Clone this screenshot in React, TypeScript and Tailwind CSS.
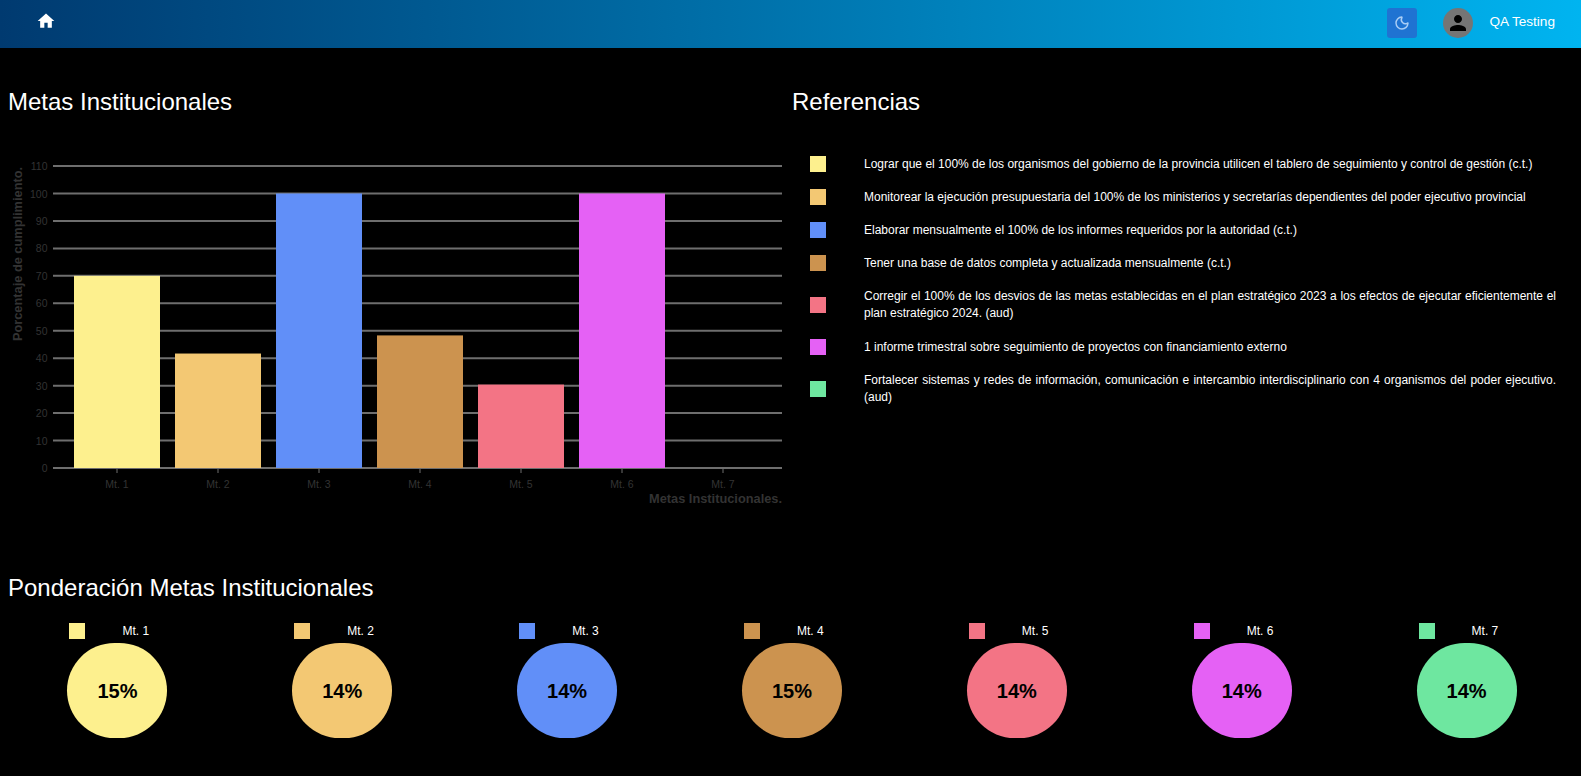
import { Moon } from "lucide-react"

const metas = [
  { label: "Mt. 1", value: 70, peso: 15, color: "#fdf08e", swatch: "bg-[#fdf08e]", text: "Lograr que el 100% de los organismos del gobierno de la provincia utilicen el tablero de seguimiento y control de gestión (c.t.)" },
  { label: "Mt. 2", value: 41.7, peso: 14, color: "#f3c873", swatch: "bg-[#f3c873]", text: "Monitorear la ejecución presupuestaria del 100% de los ministerios y secretarías dependientes del poder ejecutivo provincial" },
  { label: "Mt. 3", value: 100, peso: 14, color: "#618ff8", swatch: "bg-[#618ff8]", text: "Elaborar mensualmente el 100% de los informes requeridos por la autoridad (c.t.)" },
  { label: "Mt. 4", value: 48.3, peso: 15, color: "#cc934f", swatch: "bg-[#cc934f]", text: "Tener una base de datos completa y actualizada mensualmente (c.t.)" },
  { label: "Mt. 5", value: 30.4, peso: 14, color: "#f37485", swatch: "bg-[#f37485]", text: "Corregir el 100% de los desvios de las metas establecidas en el plan estratégico 2023 a los efectos de ejecutar eficientemente el plan estratégico 2024. (aud)" },
  { label: "Mt. 6", value: 100, peso: 14, color: "#e561f5", swatch: "bg-[#e561f5]", text: "1 informe trimestral sobre seguimiento de proyectos con financiamiento externo" },
  { label: "Mt. 7", value: 0, peso: 14, color: "#6ee7a0", swatch: "bg-[#6ee7a0]", text: "Fortalecer sistemas y redes de información, comunicación e intercambio interdisciplinario con 4 organismos del poder ejecutivo. (aud)" },
]

const yTicks = [0, 10, 20, 30, 40, 50, 60, 70, 80, 90, 100, 110]

function BarChart() {
  const y0 = 320
  const perUnit = 2.745
  return (
    <svg width="784" height="370" className="block">
      {yTicks.map((t) => (
        <g key={t}>
          <line x1="53" x2="782" y1={y0 - t * perUnit} y2={y0 - t * perUnit} stroke="#6e6e6e" strokeWidth="2" />
          <text x="47.5" y={y0 - t * perUnit + 4} textAnchor="end" fontSize="10.5" fill="#333333">{t}</text>
        </g>
      ))}
      {metas.map((m, i) => (
        <g key={m.label}>
          <rect x={74 + i * 101} width="86" y={y0 - m.value * perUnit} height={m.value * perUnit} fill={m.color} />
          <line x1={117 + i * 101} x2={117 + i * 101} y1={y0} y2={y0 + 5} stroke="#6e6e6e" strokeWidth="1" />
          <text x={117 + i * 101} y={y0 + 20} textAnchor="middle" fontSize="10.5" fill="#333333">{m.label}</text>
        </g>
      ))}
      <text x="782" y={y0 + 35} textAnchor="end" fontSize="12.8" fontWeight="700" fill="#333333">Metas Institucionales.</text>
      <text transform="translate(22 106) rotate(-90)" textAnchor="middle" x="0" y="0" fontSize="12.8" fontWeight="700" fill="#333333">Porcentaje de cumplimiento.</text>
    </svg>
  )
}

export default function App() {
  return (
    <div className="min-h-[776px] bg-black font-['Liberation_Sans',Arial,sans-serif] text-white overflow-hidden">
      <header className="h-12 flex items-center bg-gradient-to-r from-[#003a70] to-[#00b4f0]">
        <div className="pl-[36px] pb-[7px]">
          <svg width="20" height="20" viewBox="0 0 24 24" fill="#ffffff"><path d="M10 20v-6h4v6h5v-8h3L12 3 2 12h3v8z" /></svg>
        </div>
        <div className="ml-auto flex items-center pb-[2px]">
          <button className="w-[30px] h-[30px] rounded-[3px] bg-[#1f73d2] flex items-center justify-center">
            <Moon size={16} strokeWidth={2.2} className="text-[#a9cdf5]" />
          </button>
          <div className="ml-[26px] w-[30px] h-[30px] rounded-full bg-[#757575] flex items-center justify-center">
            <svg width="24" height="24" viewBox="0 0 24 24" fill="#000000"><path d="M12 12c2.21 0 4-1.79 4-4s-1.79-4-4-4-4 1.79-4 4 1.79 4 4 4m0 2c-2.67 0-8 1.34-8 4v2h16v-2c0-2.66-5.33-4-8-4" /></svg>
          </div>
          <span className="ml-[17px] mr-[26px] pb-[2px] text-[13.6px]">QA Testing</span>
        </div>
      </header>

      <main>
        <section className="flex">
          <div className="w-[784px] shrink-0">
            <h2 className="mt-[38px] pl-2 text-2xl leading-8">Metas Institucionales</h2>
            <div className="mt-[30px]">
              <BarChart />
            </div>
          </div>
          <div className="flex-1 pl-[8px] pr-[25px]">
            <h2 className="mt-[38px] text-2xl leading-8">Referencias</h2>
            <ul className="mt-[29.5px]">
              {metas.map((m) => (
                <li key={m.label} className="flex items-center py-2 [&:nth-child(5)]:pb-[9px]">
                  <span className={`ml-[18px] w-4 h-4 shrink-0 ${m.swatch}`} />
                  <p className="ml-[38px] text-xs leading-[17px] font-medium text-justify">{m.text}</p>
                </li>
              ))}
            </ul>
          </div>
        </section>

        <section className="mt-[54px]">
          <h2 className="pl-2 text-2xl leading-8">Ponderación Metas Institucionales</h2>
          <div className="mt-[19px] pl-[5px] pr-[2px] grid grid-cols-7">
            {metas.map((m) => (
              <div key={m.label} className="flex flex-col items-center">
                <div className="flex items-center w-[100px]">
                  <span className={`ml-[2px] w-4 h-4 ${m.swatch}`} />
                  <span className="ml-[37px] text-xs font-medium leading-4">{m.label}</span>
                </div>
                <div className={`mt-1 w-[100px] h-[95px] rounded-full flex items-center justify-center text-black text-xl font-bold ${m.swatch}`}>
                  {m.peso}%
                </div>
              </div>
            ))}
          </div>
        </section>
      </main>
    </div>
  )
}
